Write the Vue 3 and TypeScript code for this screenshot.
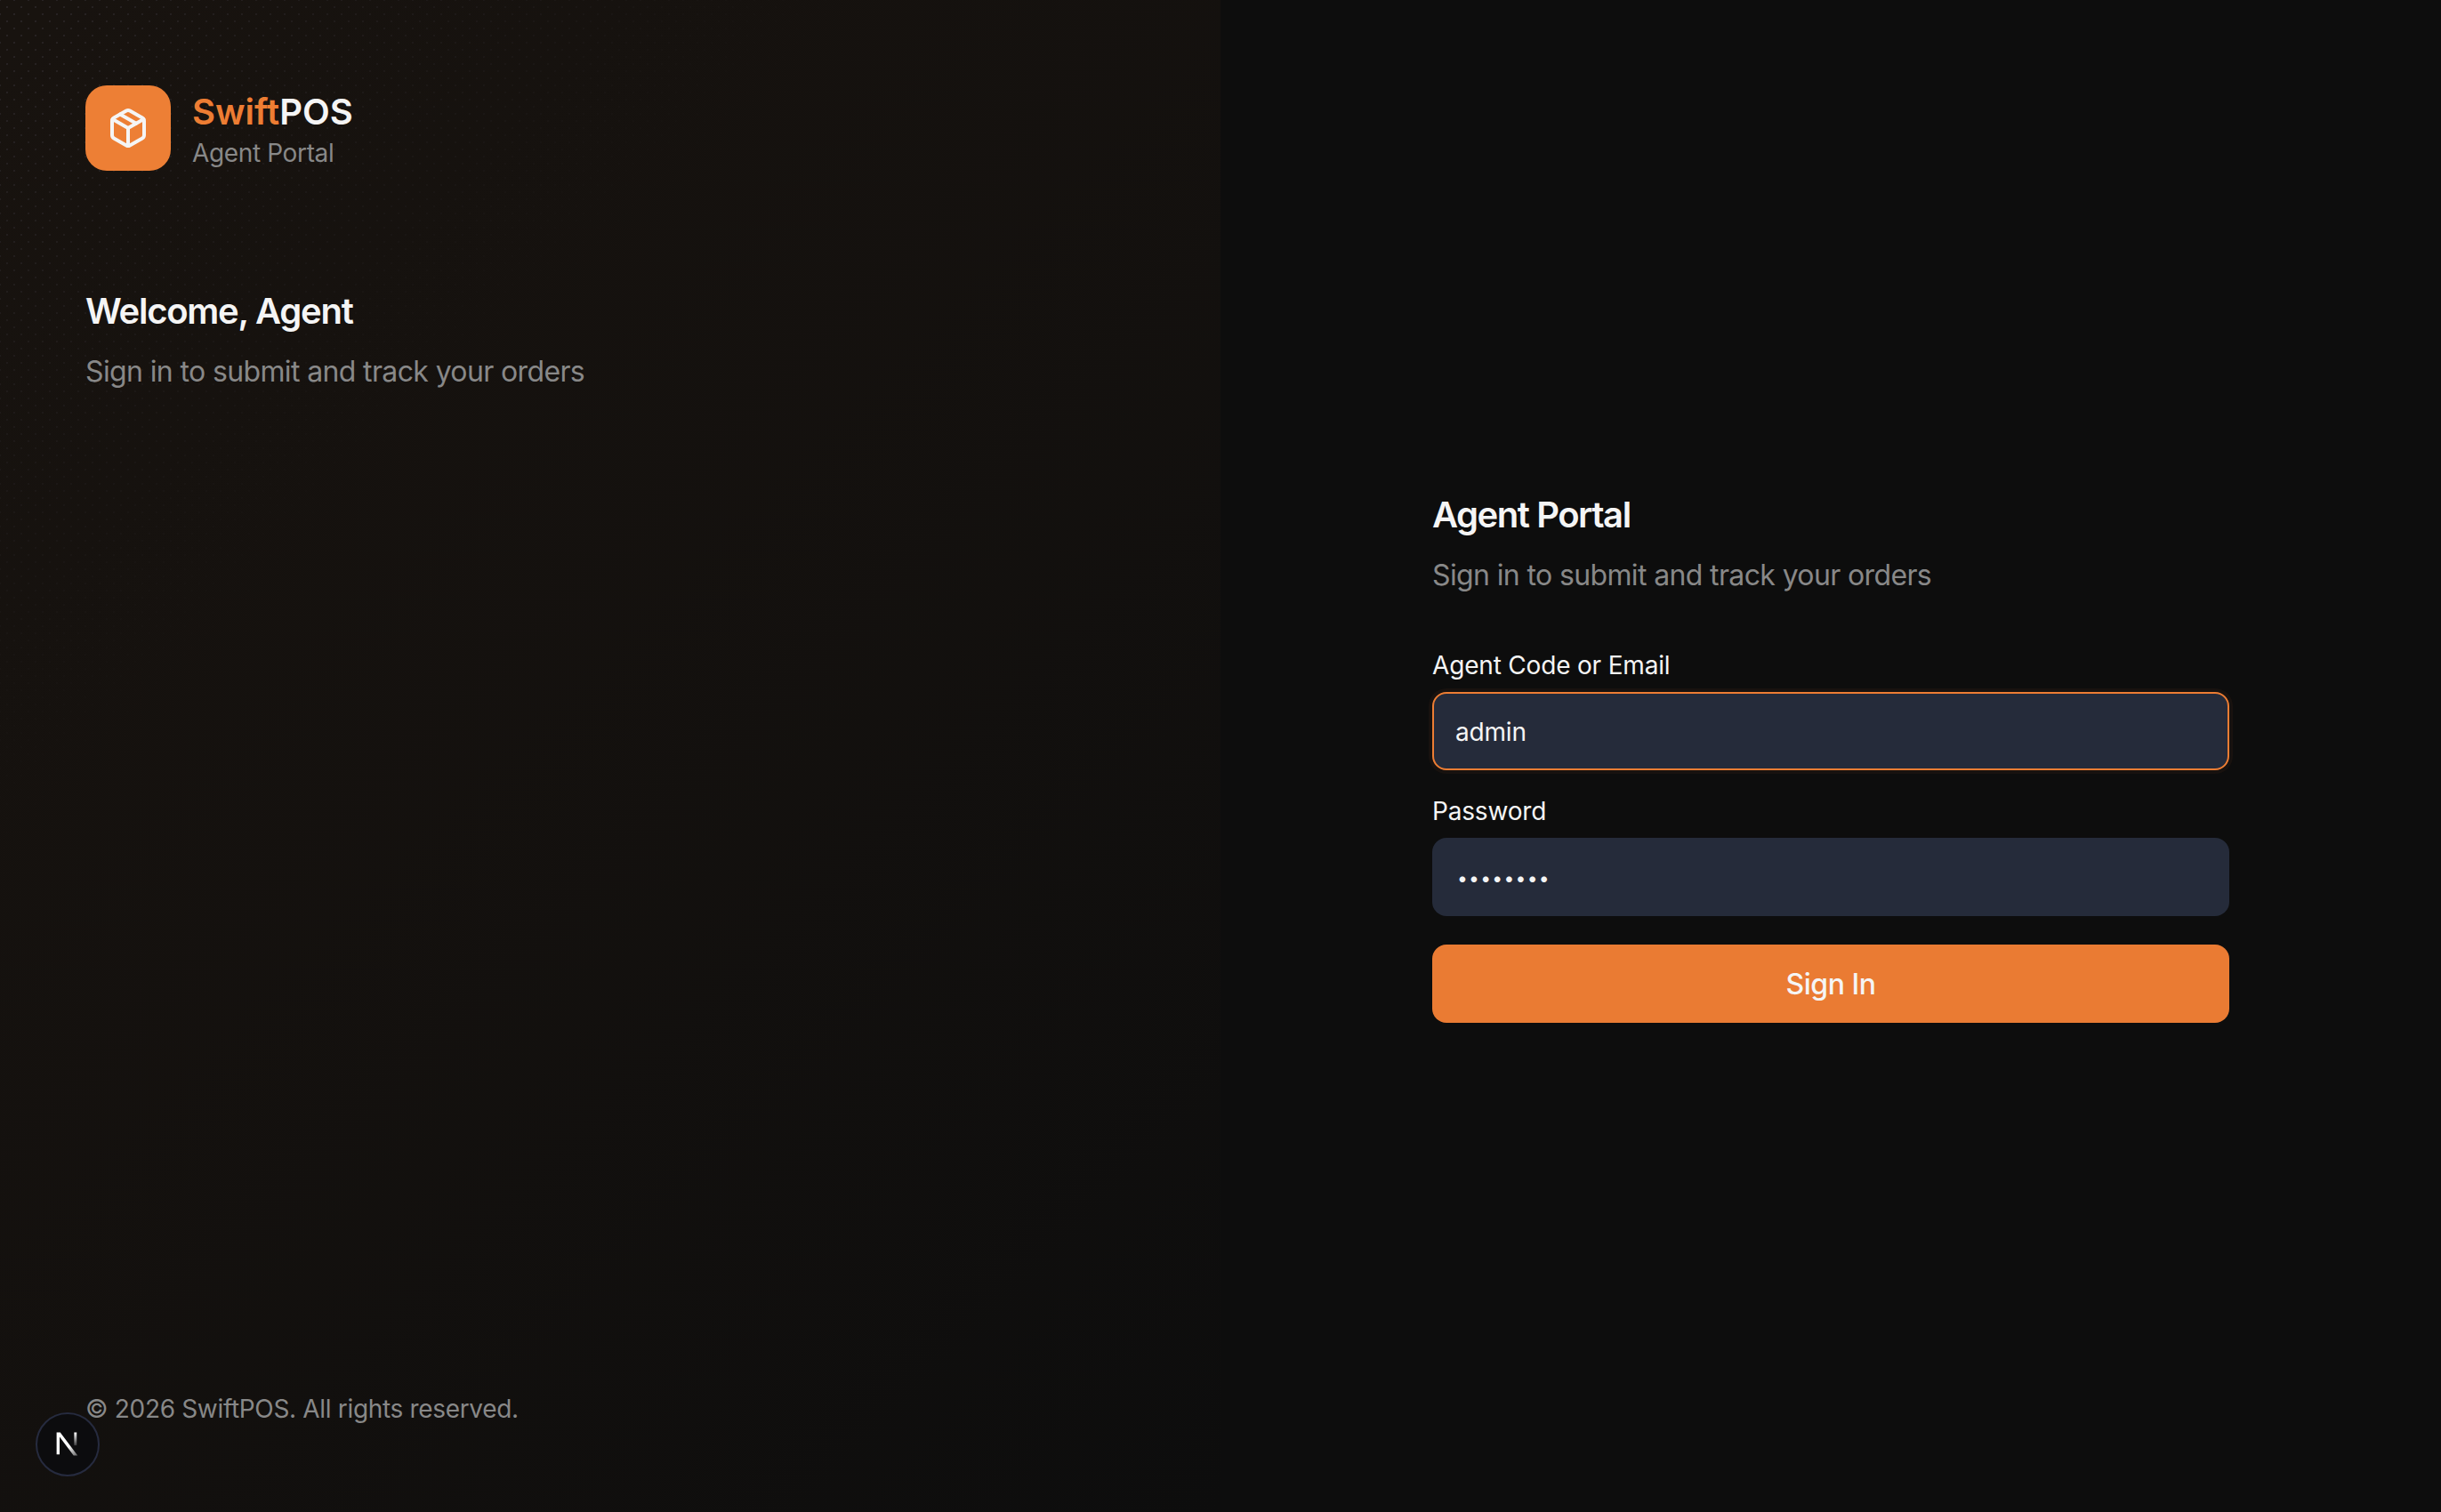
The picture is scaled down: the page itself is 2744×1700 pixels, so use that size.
<script setup lang="ts">
import { ref } from 'vue'

const login = ref('admin')
const password = ref('password')
</script>

<template>
  <div class="page">
    <aside class="brand-panel">
      <div>
        <div class="brand">
          <div class="brand-mark">
            <svg width="48" height="48" viewBox="0 0 24 24" fill="none" stroke="currentColor" stroke-width="2" stroke-linecap="round" stroke-linejoin="round">
              <path d="M11 21.73a2 2 0 0 0 2 0l7-4A2 2 0 0 0 21 16V8a2 2 0 0 0-1-1.73l-7-4a2 2 0 0 0-2 0l-7 4A2 2 0 0 0 3 8v8a2 2 0 0 0 1 1.73z" />
              <path d="M12 22V12" />
              <polyline points="3.29 7 12 12 20.71 7" />
              <path d="m7.5 4.27 9 5.15" />
            </svg>
          </div>
          <div class="brand-text">
            <div class="brand-name"><span class="accent">Swift</span>POS</div>
            <div class="brand-sub">Agent Portal</div>
          </div>
        </div>
        <div class="welcome">
          <h1>Welcome, Agent</h1>
          <p>Sign in to submit and track your orders</p>
        </div>
      </div>
      <div class="copyright">© 2026 SwiftPOS. All rights reserved.</div>
    </aside>

    <main class="form-panel">
      <form class="form" @submit.prevent>
        <h2>Agent Portal</h2>
        <p class="form-sub">Sign in to submit and track your orders</p>
        <label class="field">
          <span>Agent Code or Email</span>
          <input v-model="login" class="focused" type="text" />
        </label>
        <label class="field">
          <span>Password</span>
          <input v-model="password" class="secret" type="password" />
        </label>
        <button type="submit">Sign In</button>
      </form>
    </main>

    <div class="dev-badge">
      <svg width="36" height="36" viewBox="0 0 32 32" fill="none">
        <defs>
          <linearGradient id="n-right" x1="0" y1="0" x2="0" y2="1">
            <stop offset="0" stop-color="#fff" />
            <stop offset="1" stop-color="#fff" stop-opacity="0.2" />
          </linearGradient>
          <linearGradient id="n-diag" x1="0" y1="0" x2="1" y2="1">
            <stop offset="0.6" stop-color="#fff" />
            <stop offset="1" stop-color="#fff" stop-opacity="0.35" />
          </linearGradient>
        </defs>
        <path d="M5 4h3.6L26 27h-4L8 8.4V26H5z" fill="url(#n-diag)" />
        <rect x="22.5" y="4" width="2.6" height="13" fill="url(#n-right)" />
      </svg>
    </div>
  </div>
</template>

<style>
html,
body {
  margin: 0;
  background: #0d0d0d;
}
</style>

<style scoped>
* {
  box-sizing: border-box;
}

.page {
  display: grid;
  grid-template-columns: 1fr 1fr;
  width: 2744px;
  height: 1700px;
  position: relative;
  overflow: hidden;
  background: #0d0d0d;
  font-family: Inter, "Liberation Sans", sans-serif;
  color: #f5f5f5;
}

.brand-panel {
  display: flex;
  flex-direction: column;
  justify-content: space-between;
  padding: 96px;
  background-color: #18130f;
  background-image:
    linear-gradient(135deg, rgba(13, 13, 13, 0) 0%, rgba(13, 13, 13, 0.4) 50%, #0d0d0d 100%),
    linear-gradient(135deg, rgba(24, 19, 15, 0) 0%, #18130f 32%),
    radial-gradient(rgba(110, 105, 125, 0.2) 1px, transparent 1.5px),
    radial-gradient(rgba(110, 105, 125, 0.2) 1px, transparent 1.5px);
  background-size: auto, auto, 16px 16px, 16px 16px;
  background-position: 0 0, 0 0, 0 0, 8px 8px;
}

.brand {
  display: flex;
  gap: 24px;
}

.brand-mark {
  display: flex;
  align-items: center;
  justify-content: center;
  width: 96px;
  height: 96px;
  border-radius: 24px;
  background: #ed7f35;
  color: #f5f5f5;
}

.brand-text {
  padding-top: 6px;
}

.brand-name {
  font-size: 40px;
  line-height: 48px;
  font-weight: 600;
}

.accent {
  color: #ed7d33;
}

.brand-sub {
  margin-top: 2px;
  font-size: 28px;
  line-height: 40px;
  letter-spacing: -0.36px;
  color: #888;
}

.welcome {
  margin-top: 130px;
}

h1,
h2 {
  margin: 0;
  font-weight: 600;
  font-size: 40px;
  line-height: 56px;
}

h1 {
  letter-spacing: -1.25px;
}

.welcome p {
  margin: 16px 0 0;
  font-size: 32px;
  line-height: 48px;
  letter-spacing: -0.63px;
  color: #888;
}

.copyright {
  font-size: 28px;
  line-height: 40px;
  letter-spacing: -0.33px;
  color: #888;
}

.form-panel {
  display: flex;
  align-items: center;
  justify-content: center;
}

.form {
  display: flex;
  flex-direction: column;
  width: 896px;
}

h2 {
  padding-top: 1px;
  letter-spacing: -1.45px;
}

.form-sub {
  margin: 16px 0 57px;
  font-size: 32px;
  line-height: 48px;
  letter-spacing: -0.63px;
  color: #888;
}

.field {
  display: flex;
  flex-direction: column;
  gap: 10px;
  margin-bottom: 26px;
  font-size: 28px;
  line-height: 40px;
  letter-spacing: -0.18px;
}

.field input {
  height: 88px;
  padding: 2px 24px 0;
  border: 2px solid transparent;
  border-radius: 16px;
  outline: none;
  background: #252b3a;
  color: #f5f5f5;
  font: inherit;
  font-size: 28px;
  letter-spacing: -0.2px;
}

.field input.focused {
  border-color: #ed7d33;
  box-shadow: 0 0 0 4px rgba(237, 125, 51, 0.05);
}

.field input.secret {
  padding-left: 26px;
  font-size: 21px;
  letter-spacing: 1.3px;
}

button {
  height: 88px;
  margin-top: 6px;
  border: 0;
  border-radius: 16px;
  background: #ea7b33;
  color: #f5f5f5;
  font: inherit;
  font-size: 32px;
  font-weight: 500;
  letter-spacing: -0.5px;
}

.dev-badge {
  position: absolute;
  left: 40px;
  top: 1588px;
  display: flex;
  align-items: center;
  justify-content: center;
  width: 72px;
  height: 72px;
  border: 2px solid #262b3f;
  border-radius: 50%;
  background: #0c0c0e;
}
</style>
